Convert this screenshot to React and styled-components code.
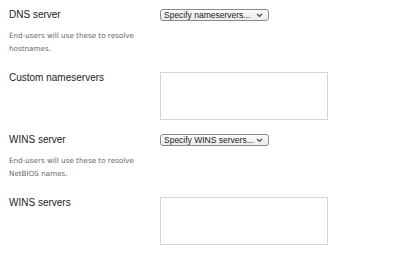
import React from 'react'
import styled, { createGlobalStyle } from 'styled-components'

const GlobalStyle = createGlobalStyle`
  body {
    margin: 0;
    background: #fff;
    font-family: "Liberation Sans", Arial, sans-serif;
  }
`

const fields = [
  {
    label: 'DNS server',
    kind: 'select',
    value: 'Specify nameservers...',
    help: ['End-users will use these to resolve', 'hostnames.'],
  },
  { label: 'Custom nameservers', kind: 'textarea' },
  {
    label: 'WINS server',
    kind: 'select',
    value: 'Specify WINS servers...',
    help: ['End-users will use these to resolve', 'NetBIOS names.'],
  },
  { label: 'WINS servers', kind: 'textarea' },
]

const App = () => (
  <>
    <GlobalStyle />
    <Form>
      {fields.map((f) => (
        <Field key={f.label} $tall={f.kind === 'textarea'}>
          <LabelCol>
            <Label>{f.label}</Label>
            {f.help && (
              <Help>
                {f.help[0]}
                <br />
                {f.help[1]}
              </Help>
            )}
          </LabelCol>
          <div>
            {f.kind === 'select' ? (
              <Select>
                <span>{f.value}</span>
                <svg width="7" height="5" viewBox="0 0 7 5">
                  <path d="M1 1l2.5 2.5L6 1" fill="none" stroke="#444" strokeWidth="1.1" />
                </svg>
              </Select>
            ) : (
              <TextArea />
            )}
          </div>
        </Field>
      ))}
    </Form>
  </>
)

const Form = styled.div`
  padding: 9px 0 0 9px;
`
const Field = styled.div`
  display: grid;
  grid-template-columns: 151px 168px;
  height: ${(p) => (p.$tall ? '62px' : '63px')};
`
const LabelCol = styled.div`
  display: flex;
  flex-direction: column;
`
const Label = styled.div`
  font-size: 10px;
  line-height: 12px;
  color: #222;
`
const Help = styled.div`
  margin-top: 8px;
  font-size: 7.2px;
  line-height: 13px;
  color: #666;
  font-family: "DejaVu Sans", sans-serif;
`
const Select = styled.div`
  box-sizing: border-box;
  width: 109px;
  height: 12px;
  display: flex;
  align-items: center;
  justify-content: space-between;
  padding: 0 5px 0 3px;
  border: 1px solid #8a8a8a;
  border-radius: 3px;
  background: linear-gradient(#fafafa, #ececec);
  font-size: 8.5px;
  color: #222;
  span {
    line-height: 10px;
    white-space: nowrap;
  }
`
const TextArea = styled.div`
  box-sizing: border-box;
  width: 168px;
  height: 48px;
  border: 1px solid #d6d6d6;
  background: #fff;
`

export default App
